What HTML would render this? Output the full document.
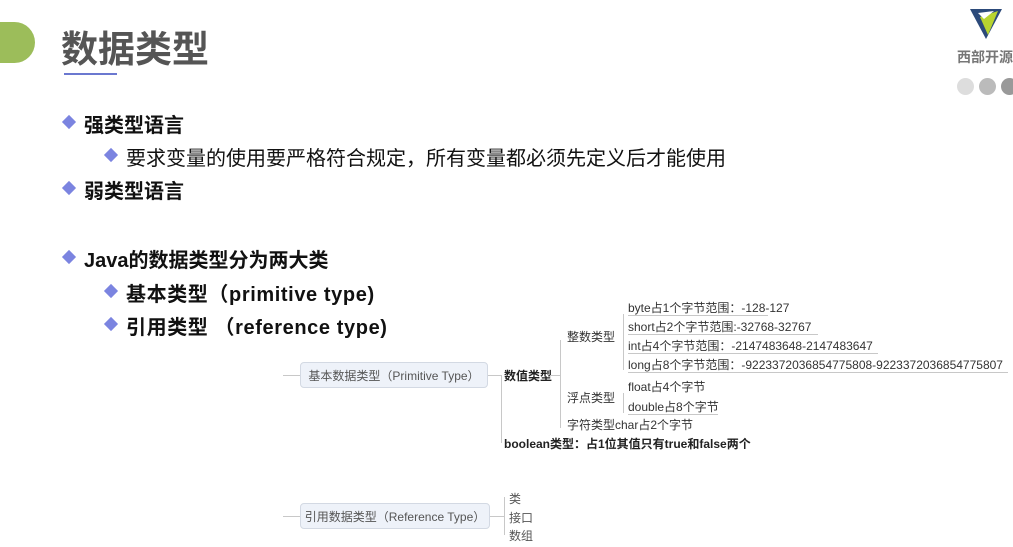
<!DOCTYPE html>
<html><head><meta charset="utf-8"><style>
body{margin:0;width:1013px;height:547px;background:#fff;position:relative;overflow:hidden;font-family:"Liberation Sans","Noto Sans CJK SC",sans-serif;color:#111}
.a{position:absolute;white-space:nowrap}
.d{position:absolute;width:10px;height:10px;background:#7b84e0;transform:rotate(45deg)}
.b{font-weight:bold;font-size:20px}
.n{font-size:20px}
.s{font-size:12px;color:#333}
.ln{position:absolute;background:#c8c8c8}
.box{position:absolute;background:#eef2f9;border:1px solid #d3d9e3;border-radius:4px;font-size:12px;color:#555;box-sizing:border-box;display:flex;align-items:center;justify-content:center}
</style></head><body>
<div class="a" style="left:-10px;top:22px;width:45px;height:41px;background:#9cbd5a;border-radius:0 21px 21px 0"></div>
<div class="a" style="left:61px;top:19px;font-size:37px;font-weight:bold;color:#555">数据类型</div>
<div class="a" style="left:64px;top:73px;width:53px;height:2px;background:#6b78d0"></div>

<svg class="a" style="left:968px;top:7px" width="36" height="34" viewBox="0 0 36 34"><polygon points="2,2 34,2 18,32" fill="#2c4a7a"/><polygon points="12,10 30,4 20,28" fill="#b8d430"/><polygon points="10,6 26,4 16,12" fill="#fff"/></svg>
<div class="a" style="left:957px;top:47px;font-size:14px;color:#777;font-weight:bold">西部开源</div>
<div class="a" style="left:957px;top:78px;width:17px;height:17px;border-radius:50%;background:#ddd"></div>
<div class="a" style="left:979px;top:78px;width:17px;height:17px;border-radius:50%;background:#bbb"></div>
<div class="a" style="left:1001px;top:78px;width:17px;height:17px;border-radius:50%;background:#999"></div>

<div class="d" style="left:64px;top:117px"></div><div class="a b" style="left:84px;top:109px">强类型语言</div>
<div class="d" style="left:106px;top:150px"></div><div class="a n" style="left:126px;top:142px">要求变量的使用要严格符合规定，所有变量都必须先定义后才能使用</div>
<div class="d" style="left:64px;top:183px"></div><div class="a b" style="left:84px;top:175px">弱类型语言</div>
<div class="d" style="left:64px;top:252px"></div><div class="a b" style="left:84px;top:244px">Java的数据类型分为两大类</div>
<div class="d" style="left:106px;top:286px"></div><div class="a b" style="left:126px;top:278px;letter-spacing:0.6px">基本类型（primitive type)</div>
<div class="d" style="left:106px;top:319px"></div><div class="a b" style="left:126px;top:311px;letter-spacing:0.6px">引用类型 （reference type)</div>

<div class="ln" style="left:283px;top:375px;width:17px;height:1px"></div>
<div class="box" style="left:300px;top:362px;width:188px;height:26px">基本数据类型（Primitive Type）</div>
<div class="ln" style="left:488px;top:375px;width:14px;height:1px"></div>
<div class="ln" style="left:501px;top:375px;width:1px;height:68px"></div>
<div class="a s" style="left:504px;top:367px;font-weight:bold;color:#222">数值类型</div>
<div class="ln" style="left:560px;top:340px;width:1px;height:88px"></div>
<div class="ln" style="left:550px;top:375px;width:10px;height:1px"></div>
<div class="a s" style="left:567px;top:328px">整数类型</div>
<div class="ln" style="left:623px;top:314px;width:1px;height:56px"></div>
<div class="a s" style="left:628px;top:299px">byte占1个字节范围：-128-127</div>
<div class="a s" style="left:628px;top:318px">short占2个字节范围:-32768-32767</div>
<div class="a s" style="left:628px;top:337px">int占4个字节范围：-2147483648-2147483647</div>
<div class="a s" style="left:628px;top:356px">long占8个字节范围：-9223372036854775808-9223372036854775807</div>
<div class="ln" style="left:628px;top:315px;width:140px;height:1px"></div>
<div class="ln" style="left:628px;top:334px;width:190px;height:1px"></div>
<div class="ln" style="left:628px;top:353px;width:250px;height:1px"></div>
<div class="ln" style="left:628px;top:372px;width:380px;height:1px"></div>
<div class="a s" style="left:567px;top:389px">浮点类型</div>
<div class="ln" style="left:623px;top:393px;width:1px;height:20px"></div>
<div class="a s" style="left:628px;top:378px">float占4个字节</div>
<div class="a s" style="left:628px;top:398px">double占8个字节</div>
<div class="ln" style="left:628px;top:414px;width:90px;height:1px"></div>
<div class="a s" style="left:567px;top:416px">字符类型char占2个字节</div>
<div class="a s" style="left:504px;top:435px;font-weight:bold;color:#222">boolean类型：占1位其值只有true和false两个</div>

<div class="ln" style="left:283px;top:516px;width:17px;height:1px"></div>
<div class="box" style="left:300px;top:503px;width:190px;height:26px">引用数据类型（Reference Type）</div>
<div class="ln" style="left:490px;top:516px;width:14px;height:1px"></div>
<div class="ln" style="left:504px;top:497px;width:1px;height:38px"></div>
<div class="a s" style="left:509px;top:490px;color:#555">类</div>
<div class="a s" style="left:509px;top:509px;color:#555">接口</div>
<div class="a s" style="left:509px;top:527px;color:#555">数组</div>
</body></html>
